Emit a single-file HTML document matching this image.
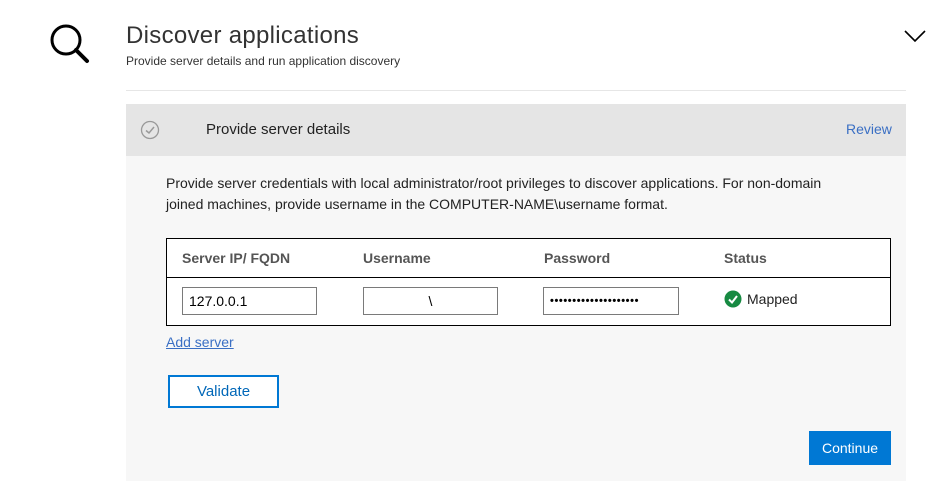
<!DOCTYPE html>
<html><head><style>
body{margin:0;width:937px;height:481px;background:#fff;font-family:"Liberation Sans",sans-serif;position:relative;overflow:hidden;color:#000}
.a{position:absolute}
.inp{position:absolute;height:28px;border:1px solid #7a7a7a;background:#fff;box-sizing:border-box;font-size:14px;line-height:26px}
.th{position:absolute;top:250px;font-size:14px;font-weight:bold;color:#555}
</style></head><body>
<svg class="a" style="left:48px;top:22px" width="44" height="44" viewBox="0 0 44 44"><circle cx="18" cy="18" r="14" fill="none" stroke="#000" stroke-width="3"/><line x1="28" y1="28" x2="39" y2="39" stroke="#000" stroke-width="4" stroke-linecap="round"/></svg>
<div class="a" style="left:126px;top:22px;font-size:24px;color:#333;letter-spacing:0.3px">Discover applications</div>
<div class="a" style="left:126px;top:54px;font-size:12px;color:#333">Provide server details and run application discovery</div>
<svg class="a" style="left:903px;top:28px" width="24" height="16"><polyline points="2,3 12,13 22,3" fill="none" stroke="#000" stroke-width="1.6"/></svg>
<div class="a" style="left:126px;top:90px;width:780px;height:1px;background:#e6e6e6"></div>
<div class="a" style="left:126px;top:104px;width:780px;height:52px;background:#e5e5e5"></div>
<svg class="a" style="left:140px;top:120px" width="20" height="20"><circle cx="10" cy="10" r="8.5" fill="none" stroke="#999" stroke-width="1.3"/><polyline points="6,10.5 9,13 14,7" fill="none" stroke="#999" stroke-width="1.5"/></svg>
<div class="a" style="left:206px;top:121px;font-size:15px;color:#222">Provide server details</div>
<div class="a" style="left:846px;top:121px;font-size:14px;color:#3a6fc4">Review</div>
<div class="a" style="left:126px;top:156px;width:780px;height:325px;background:#f7f7f7"></div>
<div class="a" style="left:166px;top:173px;width:710px;font-size:14px;line-height:21px;color:#222">Provide server credentials with local administrator/root privileges to discover applications. For non-domain<br>joined machines, provide username in the COMPUTER-NAME\username format.</div>
<div class="a" style="left:166px;top:238px;width:723px;height:86px;border:1px solid #000;background:#fff"></div>
<div class="a" style="left:167px;top:277px;width:723px;height:1px;background:#000"></div>
<div class="th" style="left:182px">Server IP/ FQDN</div>
<div class="th" style="left:363px">Username</div>
<div class="th" style="left:544px">Password</div>
<div class="th" style="left:724px">Status</div>
<div class="inp" style="left:182px;top:287px;width:135px;padding-left:6px">127.0.0.1</div>
<div class="inp" style="left:363px;top:287px;width:135px;text-align:center">\</div>
<div class="inp" style="left:543px;top:287px;width:136px;padding-left:6px;font-size:11px;letter-spacing:0.6px;font-weight:bold">&#8226;&#8226;&#8226;&#8226;&#8226;&#8226;&#8226;&#8226;&#8226;&#8226;&#8226;&#8226;&#8226;&#8226;&#8226;&#8226;&#8226;&#8226;&#8226;&#8226;</div>
<svg class="a" style="left:724px;top:290px" width="18" height="18"><circle cx="9" cy="9" r="8.5" fill="#178a42"/><polyline points="5,9.5 8,12.5 13,6" fill="none" stroke="#fff" stroke-width="2"/></svg>
<div class="a" style="left:747px;top:291px;font-size:14px;color:#222">Mapped</div>
<div class="a" style="left:166px;top:334px;font-size:14px;color:#3a6fc4;text-decoration:underline">Add server</div>
<div class="a" style="left:168px;top:375px;width:111px;height:33px;border:2px solid #0078d4;box-sizing:border-box;background:#fff;color:#0067b8;font-size:15px;text-align:center;line-height:29px">Validate</div>
<div class="a" style="left:809px;top:431px;width:82px;height:34px;background:#0078d4;color:#fff;font-size:14px;text-align:center;line-height:34px">Continue</div>
</body></html>
